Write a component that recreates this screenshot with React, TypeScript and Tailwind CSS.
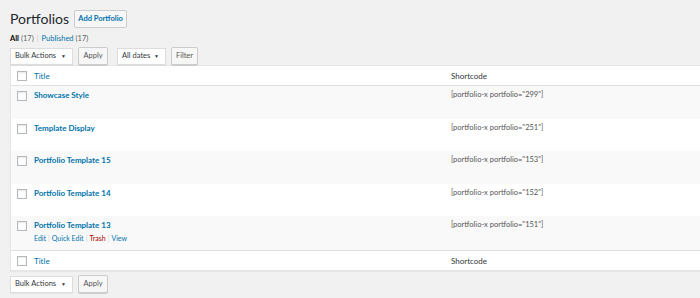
import React from 'react';

const rows = [
  { title: 'Showcase Style', id: '299' },
  { title: 'Template Display', id: '251' },
  { title: 'Portfolio Template 15', id: '153' },
  { title: 'Portfolio Template 14', id: '152' },
  { title: 'Portfolio Template 13', id: '151', actions: true },
];

function Box() {
  return <span className="block w-[10px] h-[10px] border border-[#b4b9be] bg-white shadow-[inset_0_1px_2px_rgba(0,0,0,0.1)]" />;
}

function Select({ label, width }: { label: string; width: string }) {
  return (
    <div className={`${width} h-[17px] flex items-center justify-between whitespace-nowrap pl-[4px] pr-[6px] bg-white border border-[#ddd] shadow-[0_1px_1px_rgba(0,0,0,0.04)] text-[#32373c] text-[7.5px]`}>
      <span>{label}</span>
      <span className="text-[5px]">▼</span>
    </div>
  );
}

function Btn({ label, width }: { label: string; width: string }) {
  return (
    <div className={`${width} h-[18px] flex items-center justify-center whitespace-nowrap bg-[#f7f7f7] border border-[#ccc] rounded-[2px] shadow-[0_1px_0_#ccc] text-[#555] text-[7.5px]`}>
      {label}
    </div>
  );
}

function Sep() {
  return <span className="mx-[2px] text-[#ccc]">|</span>;
}

export default function App() {
  return (
    <div className="w-[700px] h-[298px] bg-[#f1f1f1] overflow-hidden text-[8px] leading-none font-['Lato',sans-serif] text-[#444]">
      <div className="pl-[10px] pt-[10px]">
        <div className="flex items-center gap-[5px] h-[18px]">
          <h1 className="text-[14px] text-[#23282d] leading-none">Portfolios</h1>
          <div className="h-[18px] w-[53px] justify-center flex items-center border border-[#ccc] bg-[#f7f7f7] rounded-[2px] text-[#0073aa] text-[7.5px] font-bold">Add Portfolio</div>
        </div>
        <div className="mt-[6px] h-[9px] flex items-center text-[7.5px] text-[#666]">
          <span className="text-black font-bold">All</span>
          <span className="ml-[2px]">(17)</span>
          <span className="mx-[3px] text-[#ccc]">|</span>
          <span className="text-[#0073aa]">Published</span>
          <span className="ml-[2px]">(17)</span>
        </div>
        <div className="mt-[4px] flex items-center">
          <Select label="Bulk Actions" width="w-[63px]" />
          <div className="ml-[5px]"><Btn label="Apply" width="w-[30px]" /></div>
          <div className="ml-[9px]"><Select label="All dates" width="w-[49px]" /></div>
          <div className="ml-[5px]"><Btn label="Filter" width="w-[27px]" /></div>
        </div>
      </div>
      <div className="ml-[10px] bg-white border-l border-b border-t border-[#e5e5e5] shadow-[0_1px_1px_rgba(0,0,0,0.04)]">
        <div className="h-[20px] flex items-center border-b border-[#e1e1e1]">
          <div className="w-[23px] pl-[6px]"><Box /></div>
          <div className="w-[417px] text-[#0073aa]">Title</div>
          <div className="text-[#32373c]">Shortcode</div>
        </div>
        {rows.map((r, i) => (
          <div key={r.id} className={`${r.actions ? 'h-[34px]' : 'h-[32.5px]'} flex items-start pt-[5px] ${i % 2 === 0 ? 'bg-[#f9f9f9]' : 'bg-white'}`}>
            <div className="w-[23px] pl-[6px]"><Box /></div>
            <div className="w-[417px]">
              <div className="text-[#0073aa] font-bold">{r.title}</div>
              {r.actions && (
                <div className="mt-[6px] flex items-center text-[7px] text-[#0073aa]">
                  <span>Edit</span>
                  <Sep />
                  <span>Quick Edit</span>
                  <Sep />
                  <span className="text-[#a00]">Trash</span>
                  <Sep />
                  <span>View</span>
                </div>
              )}
            </div>
            <div className="text-[#555] text-[7.5px]">[portfolio-x portfolio="{r.id}"]</div>
          </div>
        ))}
        <div className="h-[20px] flex items-center border-t border-[#e1e1e1]">
          <div className="w-[23px] pl-[6px]"><Box /></div>
          <div className="w-[417px] text-[#0073aa]">Title</div>
          <div className="text-[#32373c]">Shortcode</div>
        </div>
      </div>
      <div className="pl-[10px] mt-[4px] flex items-center">
        <Select label="Bulk Actions" width="w-[63px]" />
        <div className="ml-[5px]"><Btn label="Apply" width="w-[30px]" /></div>
      </div>
    </div>
  );
}
